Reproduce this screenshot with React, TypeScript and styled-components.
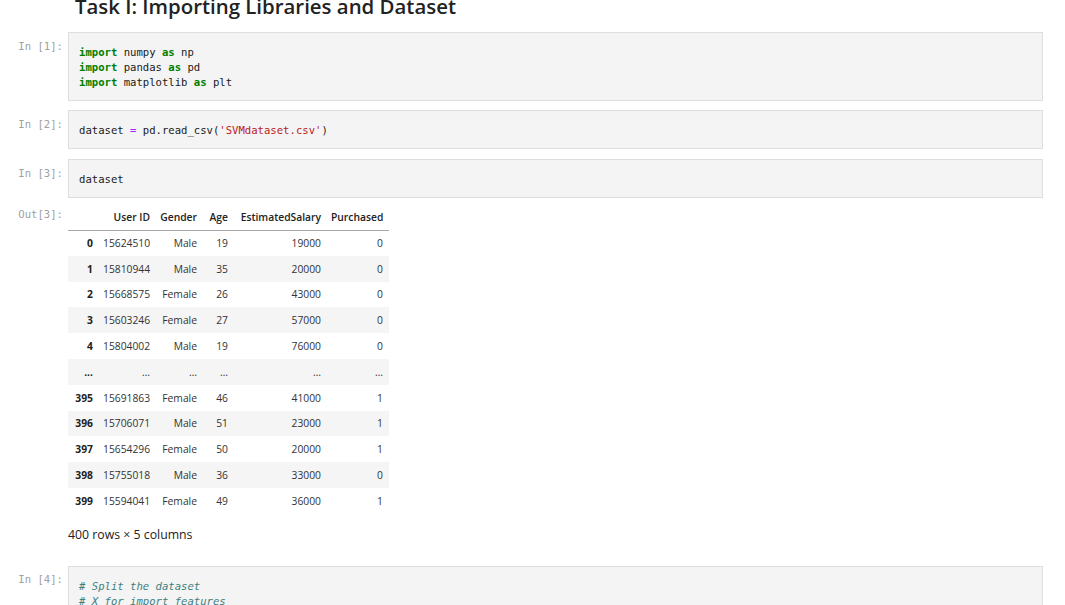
import React from 'react';
import styled, { createGlobalStyle } from 'styled-components';

const GlobalStyle = createGlobalStyle`
  html, body {
    margin: 0;
    padding: 0;
    background: #ffffff;
    overflow: hidden;
  }
  body {
    font-family: 'Open Sans', 'Noto Sans', sans-serif;
    color: #222;
  }
`;

const MONO = "'DejaVu Sans Mono', 'Liberation Mono', monospace";

type Token = { text: string; kind?: 'kw' | 'op' | 'str' | 'cm' };

type Row = (string | number)[];

const rows: Row[] = [
  [0, 15624510, 'Male', 19, 19000, 0],
  [1, 15810944, 'Male', 35, 20000, 0],
  [2, 15668575, 'Female', 26, 43000, 0],
  [3, 15603246, 'Female', 27, 57000, 0],
  [4, 15804002, 'Male', 19, 76000, 0],
  ['...', '…', '…', '…', '…', '…'],
  [395, 15691863, 'Female', 46, 41000, 1],
  [396, 15706071, 'Male', 51, 23000, 1],
  [397, 15654296, 'Female', 50, 20000, 1],
  [398, 15755018, 'Male', 36, 33000, 0],
  [399, 15594041, 'Female', 49, 36000, 1],
];

const columns = ['User ID', 'Gender', 'Age', 'EstimatedSalary', 'Purchased'];
const colWidths = [31, 57, 47, 31, 93, 62];

const Notebook = styled.div`
  padding-right: 22px;
  display: flex;
  flex-direction: column;
`;

const CellRow = styled.div<{ $gap?: number }>`
  display: flex;
  align-items: flex-start;
  margin-bottom: ${({ $gap }) => ($gap ?? 9)}px;
`;

const Prompt = styled.div<{ $top?: number }>`
  width: 68px;
  flex: 0 0 68px;
  box-sizing: border-box;
  padding-right: 5px;
  padding-top: ${({ $top }) => ($top ?? 6.5)}px;
  text-align: right;
  font-family: ${MONO};
  font-size: 10.6px;
  line-height: 15px;
  color: #a0a0a0;
  white-space: pre;
`;

const Title = styled.h2`
  margin: -7.5px 0 13.5px 0;
  padding-left: 7px;
  font-family: 'Open Sans', 'Noto Sans', sans-serif;
  font-weight: 600;
  font-size: 20.4px;
  line-height: 26px;
  color: #222;
  white-space: nowrap;
`;

const InputArea = styled.pre`
  flex: 1;
  margin: 0;
  box-sizing: border-box;
  border: 1px solid #dedede;
  background: #f4f4f4;
  padding: 12px 10px 10px 10px;
  font-family: ${MONO};
  font-size: 10.6px;
  line-height: 15px;
  color: #1a1a1a;
  white-space: pre;
  overflow: hidden;
`;

const Tok = styled.span<{ $kind?: Token['kind'] }>`
  color: ${({ $kind }) =>
    $kind === 'kw'
      ? '#008000'
      : $kind === 'op'
      ? '#aa22ff'
      : $kind === 'str'
      ? '#ba2121'
      : $kind === 'cm'
      ? '#408080'
      : 'inherit'};
  font-weight: ${({ $kind }) => ($kind === 'kw' ? 700 : 400)};
  font-style: ${({ $kind }) => ($kind === 'cm' ? 'italic' : 'normal')};
`;

const OutputArea = styled.div`
  flex: 1;
  padding-top: 6px;
`;

const Table = styled.table`
  border-collapse: collapse;
  table-layout: fixed;
  width: 321px;
  font-family: 'Open Sans', 'Noto Sans', sans-serif;
  font-size: 10.3px;
  color: #222;

  th,
  td {
    text-align: right;
    padding: 0 6px 0 4px;
    white-space: nowrap;
    height: 25.8px;
    box-sizing: border-box;
  }
  thead th {
    font-weight: 600;
    height: 26px;
    vertical-align: middle;
    border-bottom: 1px solid #a8a8a8;
  }
  tbody th {
    font-weight: 700;
  }
  tbody td {
    font-weight: 400;
    color: #333;
  }
  tbody tr:nth-child(even) {
    background: #f5f5f5;
  }
`;

const Shape = styled.p`
  margin: 12px 0 0 0;
  font-family: 'Open Sans', 'Noto Sans', sans-serif;
  font-size: 12.3px;
  line-height: 17px;
  color: #222;
`;

const Code = ({ lines }: { lines: Token[][] }) => (
  <InputArea>
    {lines.map((line, i) => (
      <div key={i}>
        {line.map((t, j) => (
          <Tok key={j} $kind={t.kind}>
            {t.text}
          </Tok>
        ))}
      </div>
    ))}
  </InputArea>
);

const imports = (mod: string, alias: string): Token[] => [
  { text: 'import', kind: 'kw' },
  { text: ` ${mod} ` },
  { text: 'as', kind: 'kw' },
  { text: ` ${alias}` },
];

export default function App() {
  return (
    <Notebook>
      <GlobalStyle />
      <CellRow $gap={0}>
        <Prompt />
        <Title>Task I: Importing Libraries and Dataset</Title>
      </CellRow>

      <CellRow>
        <Prompt>In [1]:</Prompt>
        <Code
          lines={[
            imports('numpy', 'np'),
            imports('pandas', 'pd'),
            imports('matplotlib', 'plt'),
          ]}
        />
      </CellRow>

      <CellRow $gap={10}>
        <Prompt>In [2]:</Prompt>
        <Code
          lines={[
            [
              { text: 'dataset ' },
              { text: '=', kind: 'op' },
              { text: ' pd.read_csv(' },
              { text: "'SVMdataset.csv'", kind: 'str' },
              { text: ')' },
            ],
          ]}
        />
      </CellRow>

      <CellRow $gap={0}>
        <Prompt>In [3]:</Prompt>
        <Code lines={[[{ text: 'dataset' }]]} />
      </CellRow>

      <CellRow $gap={23}>
        <Prompt $top={8.5}>Out[3]:</Prompt>
        <OutputArea>
          <Table>
            <colgroup>
              {colWidths.map((w, i) => (
                <col key={i} style={{ width: w }} />
              ))}
            </colgroup>
            <thead>
              <tr>
                <th />
                {columns.map((c) => (
                  <th key={c}>{c}</th>
                ))}
              </tr>
            </thead>
            <tbody>
              {rows.map((r, i) => (
                <tr key={i}>
                  <th>{r[0]}</th>
                  {r.slice(1).map((v, j) => (
                    <td key={j}>{v}</td>
                  ))}
                </tr>
              ))}
            </tbody>
          </Table>
          <Shape>400 rows × 5 columns</Shape>
        </OutputArea>
      </CellRow>

      <CellRow>
        <Prompt>In [4]:</Prompt>
        <Code
          lines={[
            [{ text: '# Split the dataset', kind: 'cm' }],
            [{ text: '# X for import features', kind: 'cm' }],
            [{ text: '# y for target', kind: 'cm' }],
          ]}
        />
      </CellRow>
    </Notebook>
  );
}
